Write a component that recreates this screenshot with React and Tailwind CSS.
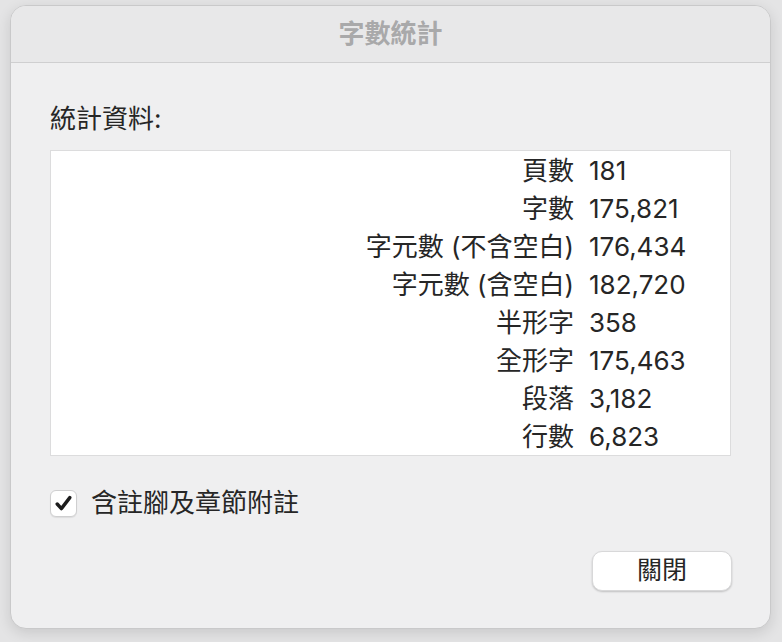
import React from 'react';

const font = { fontFamily: 'Inter, "Noto Sans CJK TC", sans-serif' };

const stats = [
  ['頁數', '181'],
  ['字數', '175,821'],
  ['字元數 (不含空白)', '176,434'],
  ['字元數 (含空白)', '182,720'],
  ['半形字', '358'],
  ['全形字', '175,463'],
  ['段落', '3,182'],
  ['行數', '6,823'],
];

export default function App() {
  return (
    <div
      className="w-[782px] h-[642px] bg-[#e4e4e5] pl-[10px] pt-[5px]"
      style={font}
    >
      <div className="w-[761px] h-[624px] rounded-[16px] bg-[#efeff0] border border-[#c9c9ca] shadow-[0_4px_14px_rgba(0,0,0,0.12)] overflow-hidden flex flex-col">
        {/* Title bar */}
        <div className="h-[57px] shrink-0 bg-[#e8e8e9] border-b border-[#cfcfd0] flex items-center justify-center">
          <span className="text-[26px] font-bold text-[#a9a9aa] leading-none">字數統計</span>
        </div>

        {/* Body */}
        <div className="flex flex-col px-[39px] pt-[40px]">
          <div className="text-[26px] leading-[32px] text-[#262626]">統計資料:</div>

          <div className="mt-[15px] h-[306px] bg-white border border-[#dcdcdd]">
            <div className="grid grid-cols-[523px_1fr] gap-x-[15px]">
              {stats.map(([label, value]) => (
                <React.Fragment key={label}>
                  <div className="h-[38px] flex items-center justify-end text-[26px] text-[#262626] whitespace-nowrap">
                    {label}
                  </div>
                  <div className="h-[38px] flex items-center text-[26px] text-[#262626]">{value}</div>
                </React.Fragment>
              ))}
            </div>
          </div>

          <div className="mt-[31px] flex items-center gap-[14px]">
            <div className="w-[27px] h-[27px] shrink-0 rounded-[6px] bg-white border border-[#cfcfd0] shadow-[0_1px_1px_rgba(0,0,0,0.08)] flex items-center justify-center">
              <svg width="21" height="21" viewBox="0 0 21 21">
                <path
                  d="M4.2 11 L8.4 15.6 L16.8 4.6"
                  fill="none"
                  stroke="#1c1c1c"
                  strokeWidth="3.4"
                  strokeLinecap="round"
                  strokeLinejoin="round"
                />
              </svg>
            </div>
            <span className="text-[26px] leading-[32px] text-[#262626]">含註腳及章節附註</span>
          </div>

          <div className="mt-[32px] flex justify-end">
            <button className="w-[140px] h-[40px] mr-[-1px] rounded-[10px] bg-white border border-[#d8d8d9] shadow-[0_1px_2px_rgba(0,0,0,0.2)] text-[25px] text-[#262626] flex items-center justify-center">
              關閉
            </button>
          </div>
        </div>
      </div>
    </div>
  );
}
